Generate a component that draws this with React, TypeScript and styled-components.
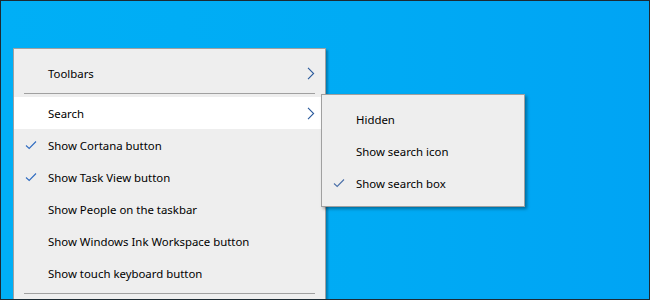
import React from 'react';
import styled, { createGlobalStyle } from 'styled-components';

const GlobalStyle = createGlobalStyle`
  html, body {
    margin: 0;
    padding: 0;
  }
  body {
    font-family: "Noto Sans", "Open Sans", "Liberation Sans", sans-serif;
  }
`;

const Desktop = styled.div`
  box-sizing: border-box;
  width: 650px;
  height: 300px;
  overflow: hidden;
  border: 1px solid #1c2a33;
  background: linear-gradient(90deg, #00aff6 0%, #00abf4 55%, #00a4f4 100%);
  padding: 47px 0 0 12px;
`;

const Menu = styled.div`
  position: relative;
  box-sizing: border-box;
  width: 313px;
  background: #eeeeee;
  border: 1px solid #a0a0a0;
  box-shadow: 2px 2px 2px rgba(0, 0, 0, 0.28);
  padding: 8px 0 6px;
`;

const Row = styled.div<{ $active?: boolean }>`
  position: relative;
  display: flex;
  align-items: center;
  height: 32px;
  background: ${p => (p.$active ? '#ffffff' : 'transparent')};
  font-size: 11.4px;
  color: #000;
  white-space: nowrap;
`;

const CheckCell = styled.span`
  display: flex;
  align-items: center;
  justify-content: center;
  width: 34px;
  height: 100%;
`;

const Label = styled.span`
  flex: 1;
`;

const ArrowCell = styled.span`
  display: flex;
  align-items: center;
  justify-content: flex-end;
  width: 24px;
  padding-right: 10px;
  height: 100%;
`;

const Separator = styled.div`
  height: 1px;
  margin: 4px 10px 3px 10px;
  background: #a0a0a0;
`;

const SubMenu = styled.div`
  position: absolute;
  left: 307px;
  top: -3px;
  box-sizing: border-box;
  width: 204px;
  background: #eeeeee;
  border: 1px solid #a0a0a0;
  box-shadow: 2px 2px 3px rgba(0, 0, 0, 0.35);
  padding: 8px 0 7px;
  z-index: 2;
`;

const CheckMark = ({ color = '#2f6bc0' }: { color?: string }) => (
  <svg width="12" height="10" viewBox="0 0 12 10">
    <path d="M1 5.5 L4.2 8.5 L11 1.5" fill="none" stroke={color} strokeWidth="1.1" />
  </svg>
);

const Arrow = () => (
  <svg width="8" height="13" viewBox="0 0 8 13">
    <path d="M1 0.8 L6.6 6.5 L1 12.2" fill="none" stroke="#2a5a9c" strokeWidth="1.1" />
  </svg>
);

const searchOptions = [
  { label: 'Hidden', checked: false },
  { label: 'Show search icon', checked: false },
  { label: 'Show search box', checked: true },
];

const toggles = [
  { label: 'Show Cortana button', checked: true },
  { label: 'Show Task View button', checked: true },
  { label: 'Show People on the taskbar', checked: false },
  { label: 'Show Windows Ink Workspace button', checked: false },
  { label: 'Show touch keyboard button', checked: false },
];

export default function App() {
  return (
    <Desktop>
      <GlobalStyle />
      <Menu>
        <Row>
          <CheckCell />
          <Label>Toolbars</Label>
          <ArrowCell><Arrow /></ArrowCell>
        </Row>
        <Separator />
        <Row $active>
          <CheckCell />
          <Label>Search</Label>
          <ArrowCell><Arrow /></ArrowCell>
          <SubMenu>
            {searchOptions.map(opt => (
              <Row key={opt.label}>
                <CheckCell>{opt.checked && <CheckMark color="#4a6fa8" />}</CheckCell>
                <Label>{opt.label}</Label>
              </Row>
            ))}
          </SubMenu>
        </Row>
        {toggles.map(t => (
          <Row key={t.label}>
            <CheckCell>{t.checked && <CheckMark />}</CheckCell>
            <Label>{t.label}</Label>
          </Row>
        ))}
        <Separator />
      </Menu>
    </Desktop>
  );
}
